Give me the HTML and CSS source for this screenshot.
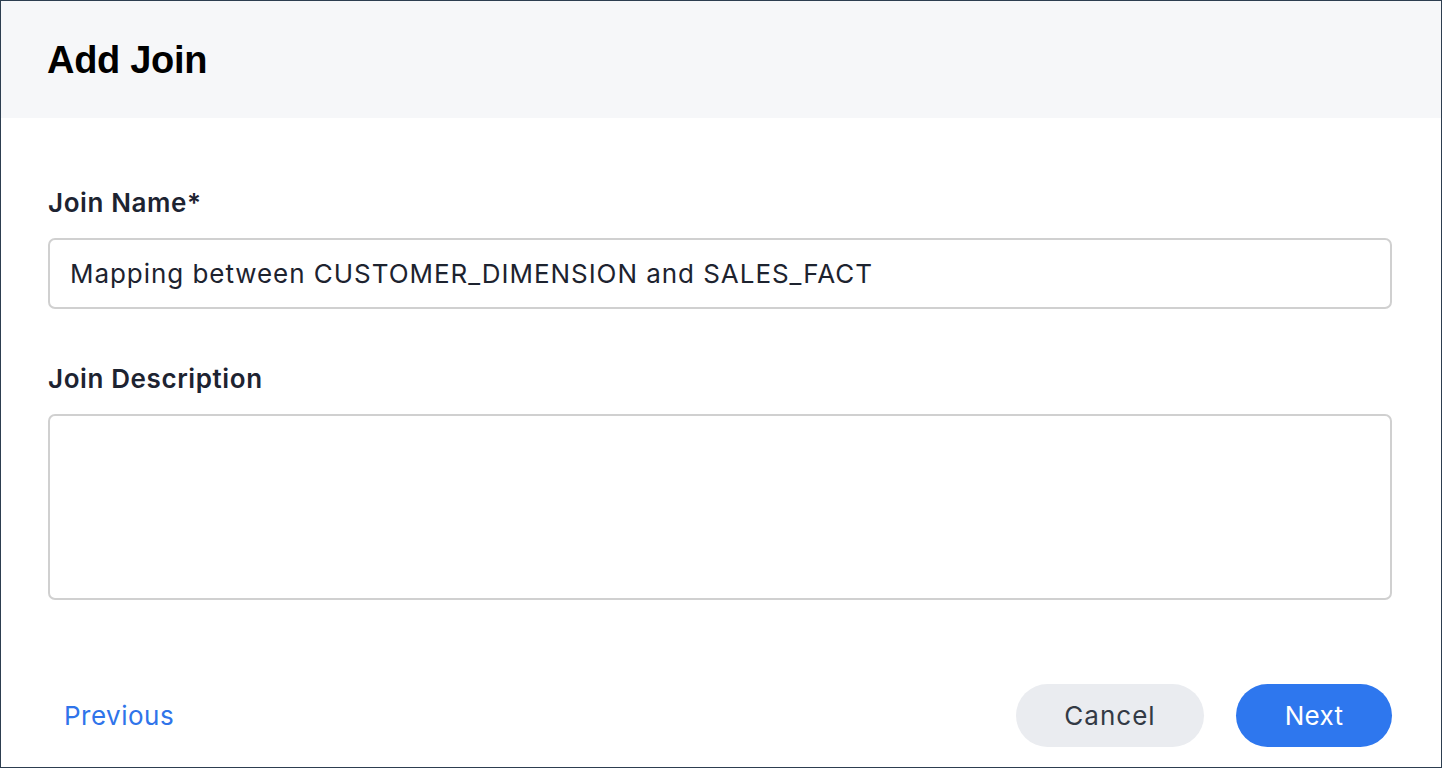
FILE: index.html
```html
<!DOCTYPE html>
<html lang="en">
<head>
<meta charset="utf-8">
<title>Add Join</title>
<link rel="stylesheet" href="styles.css">
</head>
<body>
<div class="dialog">
  <header class="dialog-header">
    <h1 class="dialog-title">Add Join</h1>
  </header>
  <main class="dialog-body">
    <label class="field-label" for="join-name">Join Name*</label>
    <div class="text-input" id="join-name">Mapping between CUSTOMER_DIMENSION and SALES_FACT</div>
    <label class="field-label field-label--second" for="join-desc">Join Description</label>
    <div class="text-area" id="join-desc"></div>
  </main>
  <footer class="dialog-footer">
    <button class="btn-link">Previous</button>
    <div class="footer-actions">
      <button class="btn btn-secondary">Cancel</button>
      <button class="btn btn-primary">Next</button>
    </div>
  </footer>
</div>
</body>
</html>
```
FILE: styles.css
```css
* { box-sizing: border-box; }
html, body { margin: 0; padding: 0; }
body {
  width: 1442px;
  height: 768px;
  font-family: Inter, "Liberation Sans", Arial, sans-serif;
  background: #ffffff;
}
.dialog {
  width: 1442px;
  height: 768px;
  border: 1px solid #2d3e50;
  display: flex;
  flex-direction: column;
  background: #ffffff;
}
.dialog-header {
  height: 117px;
  background: #f6f7f9;
  padding: 0 0 0 46px;
  display: flex;
  align-items: center;
}
.dialog-title {
  margin: 0;
  font-family: "Liberation Sans", Arial, sans-serif;
  font-size: 38px;
  font-weight: 700;
  color: #000000;
  letter-spacing: -0.3px;
  line-height: 44px;
}
.dialog-body {
  padding: 69px 49px 0 47px;
  display: flex;
  flex-direction: column;
}
.field-label {
  font-size: 26px;
  line-height: 32px;
  font-weight: 600;
  letter-spacing: 0.6px;
  color: #1d2331;
}
.field-label--second { margin-top: 54px; }
.text-input {
  margin-top: 19px;
  height: 71px;
  border: 2px solid #d0d0d0;
  border-radius: 7px;
  padding: 0 0 0 20px;
  display: flex;
  align-items: center;
  font-size: 26px;
  letter-spacing: 0.95px;
  color: #1d232f;
}
.text-area {
  margin-top: 19px;
  height: 186px;
  border: 2px solid #d0d0d0;
  border-radius: 7px;
}
.dialog-footer {
  margin-top: 84px;
  padding: 0 49px 0 47px;
  display: flex;
  align-items: center;
  justify-content: space-between;
}
.btn-link {
  border: 0;
  background: none;
  padding: 0 16px;
  font-family: inherit;
  font-size: 26px;
  letter-spacing: 0.5px;
  color: #2f74ea;
}
.footer-actions {
  display: flex;
  gap: 32px;
}
.btn {
  height: 63px;
  border: 0;
  border-radius: 32px;
  font-family: inherit;
  font-size: 26px;
}
.btn-secondary {
  width: 188px;
  background: #eaecf0;
  color: #333a45;
  letter-spacing: 1px;
}
.btn-primary {
  width: 156px;
  background: #2e77ee;
  color: #ffffff;
  letter-spacing: 0.3px;
}
```
